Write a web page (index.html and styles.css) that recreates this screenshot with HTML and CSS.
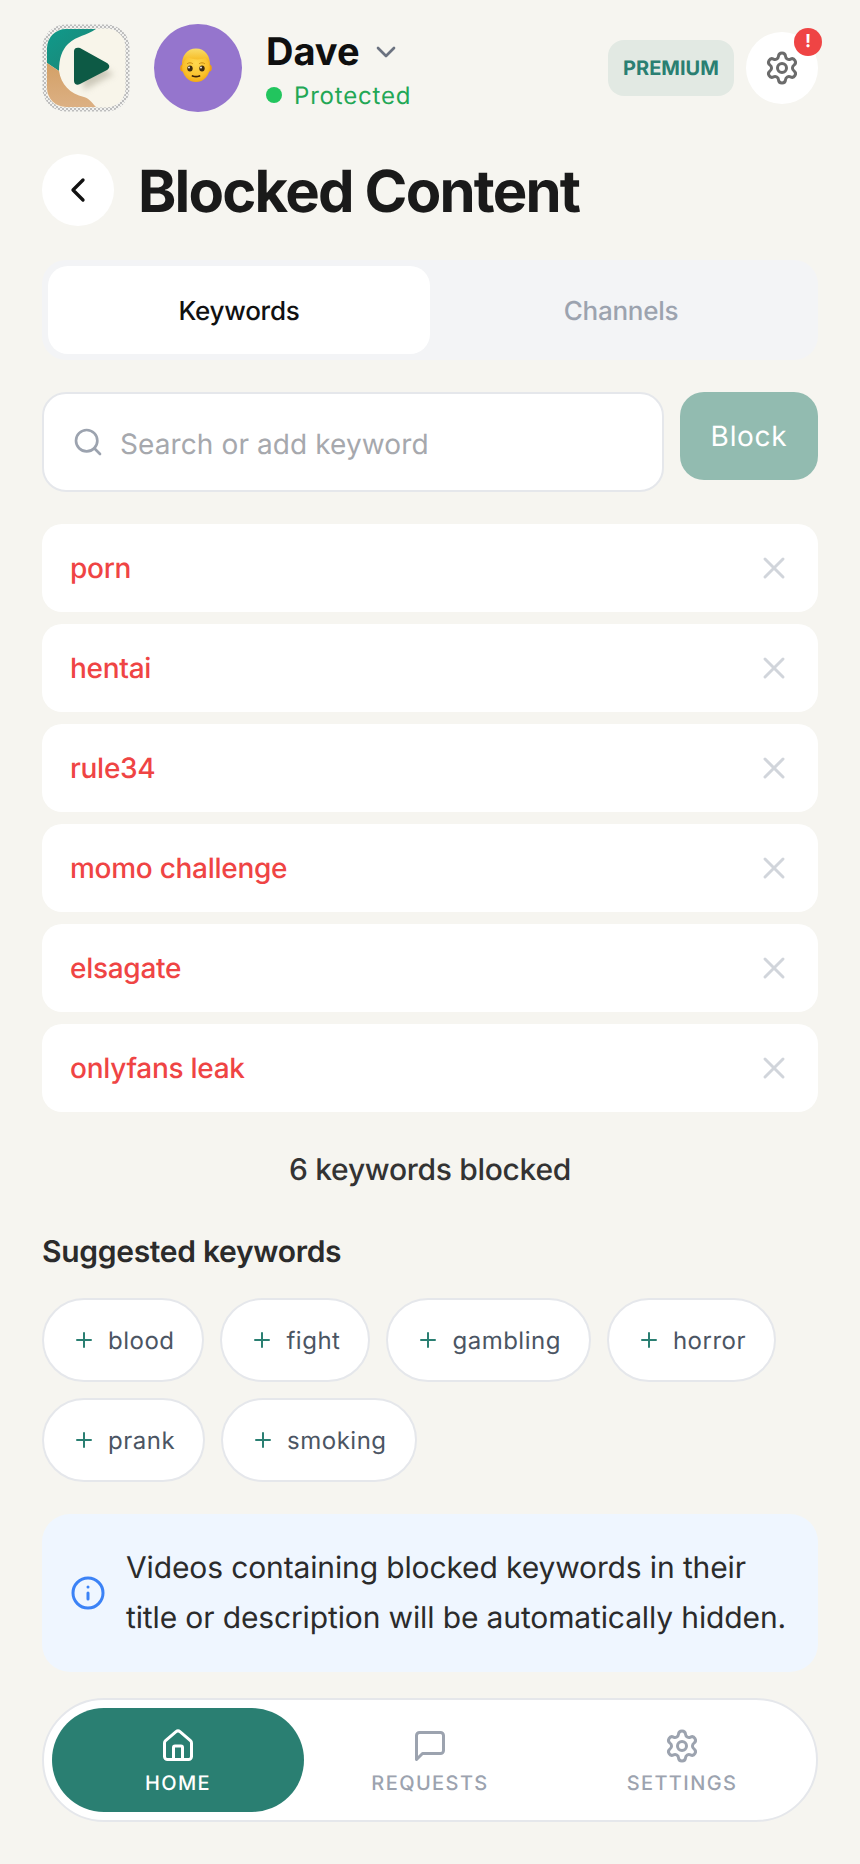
FILE: index.html
```html
<!DOCTYPE html>
<html lang="en">
<head>
<meta charset="utf-8">
<title>Blocked Content</title>
<link rel="stylesheet" href="styles.css">
</head>
<body>
<svg class="defs" width="0" height="0" aria-hidden="true">
  <defs>
    <symbol id="i-gear" viewBox="0 0 24 24"><path d="M9.671 4.136a2.34 2.34 0 0 1 4.659 0 2.34 2.34 0 0 0 3.319 1.915 2.34 2.34 0 0 1 2.33 4.033 2.34 2.34 0 0 0 0 3.831 2.34 2.34 0 0 1-2.33 4.033 2.34 2.34 0 0 0-3.319 1.915 2.34 2.34 0 0 1-4.659 0 2.34 2.34 0 0 0-3.32-1.915 2.34 2.34 0 0 1-2.33-4.033 2.34 2.34 0 0 0 0-3.831A2.34 2.34 0 0 1 6.35 6.051a2.34 2.34 0 0 0 3.319-1.915"/><circle cx="12" cy="12" r="3"/></symbol>
    <symbol id="i-x" viewBox="0 0 24 24"><path d="M18 6 6 18M6 6l12 12"/></symbol>
    <symbol id="i-plus" viewBox="0 0 24 24"><path d="M5 12h14M12 5v14"/></symbol>
    <pattern id="checker" width="4" height="4" patternUnits="userSpaceOnUse"><rect width="4" height="4" fill="#f1f1ef"/><rect width="2" height="2" fill="#bdbdbd"/><rect x="2" y="2" width="2" height="2" fill="#bdbdbd"/></pattern>
    <radialGradient id="skin" cx="50%" cy="40%" r="65%"><stop offset="0" stop-color="#fed84f"/><stop offset=".7" stop-color="#fbc02a"/><stop offset="1" stop-color="#f2a30c"/></radialGradient>
    <linearGradient id="hair" x1="0" y1="0" x2="0" y2="1"><stop offset="0" stop-color="#f9dc6a"/><stop offset=".5" stop-color="#f7c333"/><stop offset="1" stop-color="#eea318"/></linearGradient>
    <linearGradient id="teal" x1="0" y1="0" x2="1" y2="1"><stop offset="0" stop-color="#0f9a8b"/><stop offset="1" stop-color="#1f8373"/></linearGradient>
    <linearGradient id="sand" x1="0" y1="0" x2="0" y2="1"><stop offset="0" stop-color="#d3a066"/><stop offset="1" stop-color="#dcb083"/></linearGradient>
    <filter id="playshadow" x="-40%" y="-40%" width="200%" height="200%"><feGaussianBlur stdDeviation="3"/></filter>
  </defs>
</svg>

<main class="page">
  <header class="topbar">
    <svg class="logo" viewBox="0 0 88 88" role="img" aria-label="App logo">
      <rect x="0.500" y="0.500" width="87" height="87" rx="23" fill="url(#checker)"/>
      <rect x="4.500" y="4.500" width="79" height="79" rx="19" fill="#f8f5ea"/>
      <path d="M5 39V24A19 19 0 0 1 24 5H54C44 12 36 11 26 20 20 26 17 34 17 47Z" fill="url(#teal)"/>
      <path d="M5 39 17 47C19 60 28 70 42 73 48 75 50 79 54 83H24A19 19 0 0 1 5 64Z" fill="url(#sand)"/>
      <path d="M36 30 72 50 42 66Z" fill="#b9b5a4" filter="url(#playshadow)" opacity=".7"/>
      <path d="M32 27C32 24 35 23 38 24L65 39C68 41 68 44 65 46L38 60C35 62 32 60 32 57Z" fill="#0d5a45"/>
    </svg>
    <div class="avatar">
      <svg class="face" viewBox="0 0 32 34" aria-hidden="true">
        <ellipse cx="2.600" cy="20" rx="2.400" ry="3.600" fill="#ee9f12"/>
        <ellipse cx="29.400" cy="20" rx="2.400" ry="3.600" fill="#ee9f12"/>
        <ellipse cx="16" cy="18.500" rx="14" ry="15.500" fill="url(#skin)"/>
        <path d="M2.200 19C1 8 7 .5 16 .5S31 8 29.800 19C29 14 27.500 11.500 25 10 19 12.500 12 11.500 8 9 5 11 3.500 14 2.200 19Z" fill="url(#hair)"/>
        <path d="M7.500 15.500c1.500-1 3.500-1 5 0M19.500 15.500c1.500-1 3.500-1 5 0" stroke="#c98a10" stroke-width="1" fill="none" stroke-linecap="round"/>
        <ellipse cx="10" cy="20.500" rx="2.700" ry="2.900" fill="#3d2a10"/>
        <ellipse cx="22" cy="20.500" rx="2.700" ry="2.900" fill="#3d2a10"/>
        <circle cx="9" cy="19.500" r=".9" fill="#fff"/>
        <circle cx="21" cy="19.500" r=".9" fill="#fff"/>
        <path d="M12.500 28c2 .8 5 .8 7 0" stroke="#3d2208" stroke-width="1.800" stroke-linecap="round" fill="none"/>
      </svg>
    </div>
    <div class="who">
      <div class="who-name">
        <span class="name">Dave</span>
        <svg class="ico chev" viewBox="0 0 24 24"><path d="m6 9 6 6 6-6"/></svg>
      </div>
      <div class="status"><span class="dot"></span><span>Protected</span></div>
    </div>
    <span class="premium">PREMIUM</span>
    <button class="gear-btn" type="button" aria-label="Settings">
      <svg class="ico gear"><use href="#i-gear"/></svg>
      <span class="alert">!</span>
    </button>
  </header>

  <div class="title-row">
    <button class="back" type="button" aria-label="Back">
      <svg class="ico back-ico" viewBox="0 0 24 24"><path d="m15 18-6-6 6-6"/></svg>
    </button>
    <h1>Blocked Content</h1>
  </div>

  <div class="tabs">
    <div class="tab active">Keywords</div>
    <div class="tab">Channels</div>
  </div>

  <div class="search-row">
    <div class="search">
      <svg class="ico search-ico" viewBox="0 0 24 24"><circle cx="11" cy="11" r="8"/><path d="m21 21-4.300-4.300"/></svg>
      <span class="placeholder">Search or add keyword</span>
    </div>
    <button class="block" type="button">Block</button>
  </div>

  <ul class="list">
    <li class="row"><span>porn</span><svg class="ico x"><use href="#i-x"/></svg></li>
    <li class="row"><span>hentai</span><svg class="ico x"><use href="#i-x"/></svg></li>
    <li class="row"><span>rule34</span><svg class="ico x"><use href="#i-x"/></svg></li>
    <li class="row"><span>momo challenge</span><svg class="ico x"><use href="#i-x"/></svg></li>
    <li class="row"><span>elsagate</span><svg class="ico x"><use href="#i-x"/></svg></li>
    <li class="row"><span>onlyfans leak</span><svg class="ico x"><use href="#i-x"/></svg></li>
  </ul>

  <p class="count">6 keywords blocked</p>

  <h2>Suggested keywords</h2>
  <div class="chips">
    <span class="chip"><svg class="ico plus"><use href="#i-plus"/></svg>blood</span>
    <span class="chip"><svg class="ico plus"><use href="#i-plus"/></svg>fight</span>
    <span class="chip"><svg class="ico plus"><use href="#i-plus"/></svg>gambling</span>
    <span class="chip"><svg class="ico plus"><use href="#i-plus"/></svg>horror</span>
    <span class="chip"><svg class="ico plus"><use href="#i-plus"/></svg>prank</span>
    <span class="chip"><svg class="ico plus"><use href="#i-plus"/></svg>smoking</span>
  </div>

  <aside class="info">
    <svg class="ico info-ico" viewBox="0 0 24 24"><circle cx="12" cy="12" r="10"/><path d="M12 16v-4M12 8h.01"/></svg>
    <p>Videos containing blocked keywords in their title or description will be automatically hidden.</p>
  </aside>

  <nav class="nav">
    <a class="nav-item on">
      <svg class="ico nav-ico" viewBox="0 0 24 24"><path d="M15 21v-8a1 1 0 0 0-1-1h-4a1 1 0 0 0-1 1v8"/><path d="M3 10a2 2 0 0 1 .709-1.528l7-6a2 2 0 0 1 2.582 0l7 6A2 2 0 0 1 21 10v9a2 2 0 0 1-2 2H5a2 2 0 0 1-2-2z"/></svg>
      <span>HOME</span>
    </a>
    <a class="nav-item">
      <svg class="ico nav-ico" viewBox="0 0 24 24"><path d="M21 15a2 2 0 0 1-2 2H7l-4 4V5a2 2 0 0 1 2-2h14a2 2 0 0 1 2 2z"/></svg>
      <span>REQUESTS</span>
    </a>
    <a class="nav-item">
      <svg class="ico nav-ico"><use href="#i-gear"/></svg>
      <span>SETTINGS</span>
    </a>
  </nav>
</main>
</body>
</html>
```
FILE: styles.css
```css
* { box-sizing: border-box; }
html, body { margin: 0; padding: 0; }
body {
  background: #f6f5f0;
  font-family: Inter, "Liberation Sans", sans-serif;
  text-rendering: geometricPrecision;
  color: #1a1a1a;
}
.defs { position: absolute; }
.page { width: 860px; height: 1864px; padding: 24px 42px 0; overflow: hidden; }
.ico {
  fill: none;
  stroke: currentColor;
  stroke-width: 2;
  stroke-linecap: round;
  stroke-linejoin: round;
  flex: none;
  display: block;
}
button { font: inherit; border: 0; padding: 0; text-rendering: inherit; }

.topbar { display: flex; align-items: center; height: 88px; }
.logo { width: 88px; height: 88px; flex: none; display: block; }
.avatar {
  width: 88px; height: 88px; margin-left: 24px; border-radius: 50%;
  background: #9575cd; display: flex; align-items: center; justify-content: center; flex: none;
}
.face { width: 32px; height: 34px; display: block; margin: 0 4px 6px 0; }
.who { margin-left: 24px; flex: 1; }
.who-name { display: flex; align-items: center; gap: 12px; height: 44px; margin-top: 4px; }
.name { font-size: 38px; font-weight: 700; color: #0f0f0f; line-height: 44px; }
.chev { width: 32px; height: 32px; color: #6b7280; margin-left: -2px; }
.status { display: flex; align-items: center; gap: 12px; margin-top: 6px; height: 30px; font-size: 24px; font-weight: 400; letter-spacing: .8px; color: #22a755; }
.dot { width: 16px; height: 16px; border-radius: 50%; background: #22c55e; }
.premium {
  width: 126px; height: 56px; border-radius: 16px; background: #e2e9e3; color: #2a7f72;
  display: flex; align-items: center; justify-content: center; font-size: 20px; font-weight: 700;
}
.gear-btn {
  position: relative; width: 72px; height: 72px; margin-left: 12px; border-radius: 50%;
  background: #fff; display: flex; align-items: center; justify-content: center; color: #6b6b6b;
}
.gear { width: 36px; height: 36px; }
.alert {
  position: absolute; top: -4px; right: -4px; width: 28px; height: 28px; border-radius: 50%;
  background: #ef4444; color: #fff; font-size: 18px; font-weight: 700; line-height: 28px; text-align: center;
}

.title-row { display: flex; align-items: center; gap: 24px; margin-top: 42px; height: 72px; }
.back {
  width: 72px; height: 72px; border-radius: 50%; background: #fff; flex: none;
  display: flex; align-items: center; justify-content: center; color: #111;
}
.back-ico { width: 40px; height: 40px; }
h1 { margin: 2px 0 0; font-size: 58px; font-weight: 700; letter-spacing: -1.800px; line-height: 72px; color: #1a1a1a; }

.tabs {
  display: grid; grid-template-columns: 1fr 1fr; margin-top: 34px; height: 100px;
  padding: 6px; background: #f3f4f6; border-radius: 24px;
}
.tab {
  display: flex; align-items: center; justify-content: center; border-radius: 20px;
  padding-top: 2px;
  font-size: 26px; font-weight: 500; letter-spacing: -.26px; color: #9ca3af;
}
.tab.active { background: #fff; color: #111; }

.search-row { display: flex; align-items: flex-start; gap: 16px; margin-top: 32px; }
.search {
  flex: 1; height: 100px; border: 2px solid #e5e7eb; border-radius: 24px; background: #fff;
  display: flex; align-items: center; gap: 16px; padding-left: 28px;
  font-size: 28px; letter-spacing: .1px; color: #a6a8ad;
}
.placeholder { padding-top: 3px; }
.search-ico { width: 32px; height: 32px; color: #9ca3af; }
.block {
  width: 138px; height: 88px; border-radius: 24px; background: #92bbb0; color: #fff;
  font-size: 28px; font-weight: 400; letter-spacing: .7px;
}

.list { list-style: none; margin: 32px 0 0; padding: 0; display: flex; flex-direction: column; gap: 12px; }
.row {
  height: 88px; background: #fff; border-radius: 20px; padding: 0 26px 0 28px;
  display: flex; align-items: center; justify-content: space-between;
  font-size: 28px; font-weight: 500; letter-spacing: -.28px; color: #ef4444;
}
.x { width: 36px; height: 36px; color: #d1d5db; }

.count { margin: 40px 0 0; text-align: center; font-size: 30px; font-weight: 500; letter-spacing: -.3px; line-height: 36px; color: #333; }
h2 { margin: 46px 0 0; font-size: 30px; font-weight: 600; letter-spacing: -.3px; line-height: 36px; color: #2b2b2b; }

.chips { display: flex; flex-wrap: wrap; gap: 16px; margin-top: 28px; }
.chip {
  height: 84px; border: 2px solid #e5e7eb; border-radius: 42px; background: #fff;
  display: inline-flex; align-items: center; gap: 12px; padding: 0 28px;
  font-size: 24px; font-weight: 400; letter-spacing: .5px; color: #4b5563;
}
.plus { width: 24px; height: 24px; color: #2a7f72; }

.info {
  display: flex; align-items: center; gap: 20px; margin-top: 32px; height: 158px;
  padding: 0 24px 0 28px; background: #eff6ff; border-radius: 28px;
}
.info-ico { width: 36px; height: 36px; color: #3b82f6; }
.info p { margin: 0; font-size: 30px; letter-spacing: -.13px; line-height: 50px; color: #2b2b2b; }

.nav {
  display: grid; grid-template-columns: repeat(3, 1fr); margin-top: 26px; height: 124px;
  padding: 8px; background: #fff; border: 2px solid #e5e7eb; border-radius: 62px;
}
.nav-item {
  display: flex; flex-direction: column; align-items: center; justify-content: center; gap: 7px;
  padding-top: 3px;
  border-radius: 52px; color: #9ca3af; font-size: 20px; font-weight: 500; letter-spacing: 1.400px;
}
.nav-item.on { background: #2a7f72; color: #fff; }
.nav-ico { width: 36px; height: 36px; }
```
